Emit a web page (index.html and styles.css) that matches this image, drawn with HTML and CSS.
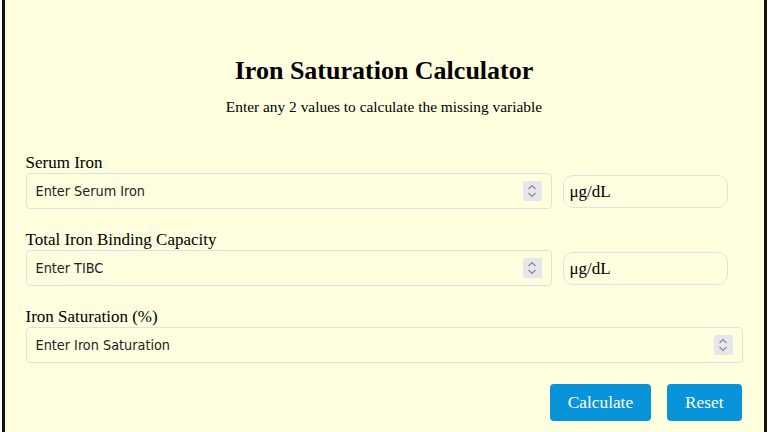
FILE: index.html
```html
<!DOCTYPE html>
<html lang="en">
<head>
    <meta charset="UTF-8">
    <meta name="viewport" content="width=device-width, initial-scale=1.0">
    <title>Iron Saturation Calculator</title>
    <link rel="stylesheet" href="styles.css">
</head>
<body>
    <section class="calc">
        <h1>Iron Saturation Calculator</h1>
        <p class="intro">Enter any 2 values to calculate the missing variable</p>

        <div class="group">
            <label for="serum">Serum Iron</label>
            <div class="row">
                <div class="num">
                    <input type="number" id="serum" placeholder="Enter Serum Iron">
                    <span class="spin"><svg width="10" height="14" viewBox="0 0 10 14"><path d="M1.5 5 5 1.5 8.5 5M1.5 9 5 12.5 8.5 9" fill="none" stroke="#8a8a8a" stroke-width="1.2"/></svg></span>
                </div>
                <div class="unit">μg/dL</div>
            </div>
        </div>

        <div class="group">
            <label for="tibc">Total Iron Binding Capacity</label>
            <div class="row">
                <div class="num">
                    <input type="number" id="tibc" placeholder="Enter TIBC">
                    <span class="spin"><svg width="10" height="14" viewBox="0 0 10 14"><path d="M1.5 5 5 1.5 8.5 5M1.5 9 5 12.5 8.5 9" fill="none" stroke="#8a8a8a" stroke-width="1.2"/></svg></span>
                </div>
                <div class="unit">μg/dL</div>
            </div>
        </div>

        <div class="group">
            <label for="sat">Iron Saturation (%)</label>
            <div class="num">
                <input type="number" id="sat" placeholder="Enter Iron Saturation">
                <span class="spin"><svg width="10" height="14" viewBox="0 0 10 14"><path d="M1.5 5 5 1.5 8.5 5M1.5 9 5 12.5 8.5 9" fill="none" stroke="#8a8a8a" stroke-width="1.2"/></svg></span>
            </div>
        </div>

        <div class="btns">
            <button id="calc">Calculate</button>
            <button id="reset">Reset</button>
        </div>
    </section>
</body>
</html>
```

FILE: styles.css
```css
*{margin:0; padding:0; box-sizing:border-box;}
body{background:#FFF; font-family:"Liberation Serif", "Times New Roman", serif; color:#000;}

.calc{width:765px; height:432px; margin:0 auto; background:#FFFFE0; border-left:3px solid #111; border-right:3px solid #111; padding:53px 21px 0 21px;}
.calc h1{text-align:center; font-size:26px; line-height:36px; font-weight:bold;}
.calc .intro{text-align:center; font-size:15.4px; line-height:18px; margin-top:9px; margin-bottom:37px;}

.group{margin-bottom:21px;}
.group label{display:block; font-size:17px; line-height:19px; margin-bottom:1px;}

.row{display:flex; gap:11px; align-items:center;}
.row .num{flex:1;}

.num{display:flex; align-items:center; height:36px; border:1px solid #DDE1E4; border-radius:4px; padding:0 9px 0 9px;}
.num input{flex:1; border:none; outline:none; background:transparent; font-family:"DejaVu Sans Condensed", "DejaVu Sans", sans-serif; font-size:14.3px; color:#222; -moz-appearance:textfield;}
.num input::placeholder{color:#222;}
.num input::-webkit-inner-spin-button,
.num input::-webkit-outer-spin-button{-webkit-appearance:none; margin:0;}
.spin{display:flex; align-items:center; justify-content:center; width:19px; height:20px; background:#E6E6EC; border-radius:2px;}

.unit{width:165px; height:33px; margin-right:15px; border:1px solid #DDE1E4; border-radius:10px; padding-left:6px; font-size:17px; line-height:31px;}

.btns{display:flex; justify-content:flex-end; gap:16px; padding-right:1px;}
.btns button{height:37px; padding:0 18px; background:#0993D8; color:#FFF; border:none; border-radius:4px; font-family:"Liberation Serif", "Times New Roman", serif; font-size:17.3px;}
```
